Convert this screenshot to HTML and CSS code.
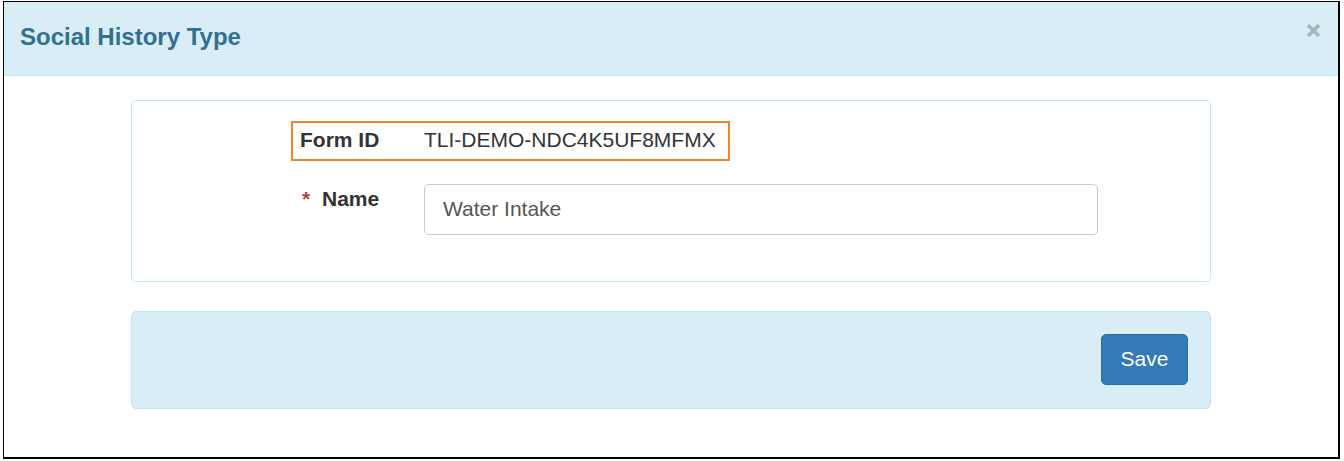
FILE: index.html
```html
<!DOCTYPE html>
<html>
<head>
<meta charset="utf-8">
<link rel="stylesheet" href="styles.css">
</head>
<body>
<div class="frame">
  <div class="modal-header">
    <h4 class="modal-title">Social History Type</h4>
    <button class="close" type="button" aria-label="Close">
      <svg width="15" height="15" viewBox="0 0 15 15"><path d="M2 2 L13 13 M13 2 L2 13" stroke="#a7b6bd" stroke-width="3.6" stroke-linecap="butt"/></svg>
    </button>
  </div>
  <div class="modal-body">
    <div class="panel">
      <div class="id-box">
        <span class="label">Form ID</span>
        <span class="value">TLI-DEMO-NDC4K5UF8MFMX</span>
      </div>
      <div class="field-row">
        <label class="label"><span class="req">*</span>Name</label>
        <input class="input" type="text" value="Water Intake">
      </div>
    </div>
    <div class="footer">
      <button class="btn" type="button">Save</button>
    </div>
  </div>
</div>
</body>
</html>
```
FILE: styles.css
```css
* { box-sizing: border-box; }
html, body { margin: 0; background: #fff; }
body {
  padding: 1px 0 0 3px;
  font-family: "Liberation Sans", Arial, sans-serif;
  color: #333;
}
.frame {
  width: 1337px;
  height: 458px;
  border: 1px solid #000;
  border-right-width: 2px;
  border-bottom-width: 2px;
  background: #fff;
}
.modal-header {
  height: 74px;
  background: #d9edf7;
  border-bottom: 1px solid #bce8f1;
  display: flex;
  align-items: flex-start;
  padding: 23px 17px 0 16px;
}
.modal-title {
  margin: 0;
  font-size: 24px;
  line-height: 24px;
  font-weight: bold;
  color: #31708f;
}
.close {
  margin-left: auto;
  margin-top: -2px;
  padding: 0;
  border: 0;
  background: none;
  width: 15px;
  height: 15px;
  display: block;
}
.close svg { display: block; }
.modal-body {
  padding: 24px 0 0 127px;
}
.panel {
  width: 1080px;
  height: 182px;
  border: 1px solid #bce8f1;
  border-radius: 5px;
  padding: 20px 0 0 159px;
}
.id-box {
  display: inline-flex;
  align-items: center;
  height: 40px;
  border: 2px solid #f0862a;
  padding: 0 12px 2px 7px;
  font-size: 21px;
}
.label {
  width: 124px;
  font-weight: bold;
  font-size: 21px;
  color: #333;
  flex: none;
}
.value {
  color: #333;
}
.field-row {
  display: flex;
  align-items: flex-start;
  margin-top: 23px;
  padding-left: 9px;
}
.field-row .label {
  line-height: 30px;
  padding-top: 0;
}
.req {
  display: inline-block;
  width: 22px;
  padding-left: 2px;
  color: #a94442;
}
.input {
  width: 674px;
  height: 51px;
  border: 1px solid #ccc;
  border-radius: 5px;
  padding: 0 18px 2px;
  font-family: "Liberation Sans", Arial, sans-serif;
  font-size: 21px;
  color: #555;
  background: #fff;
  outline: none;
}
.footer {
  margin-top: 29px;
  width: 1080px;
  height: 98px;
  background: #d9edf7;
  border: 1px solid #bce8f1;
  border-radius: 5px;
  padding: 22px 22px 0 0;
  display: flex;
  justify-content: flex-end;
  align-items: flex-start;
}
.btn {
  width: 87px;
  height: 51px;
  background: #337ab7;
  border: 1px solid #2e6da4;
  border-radius: 5px;
  color: #fff;
  font-family: "Liberation Sans", Arial, sans-serif;
  font-size: 21px;
  padding: 0 0 2px;
}
```
